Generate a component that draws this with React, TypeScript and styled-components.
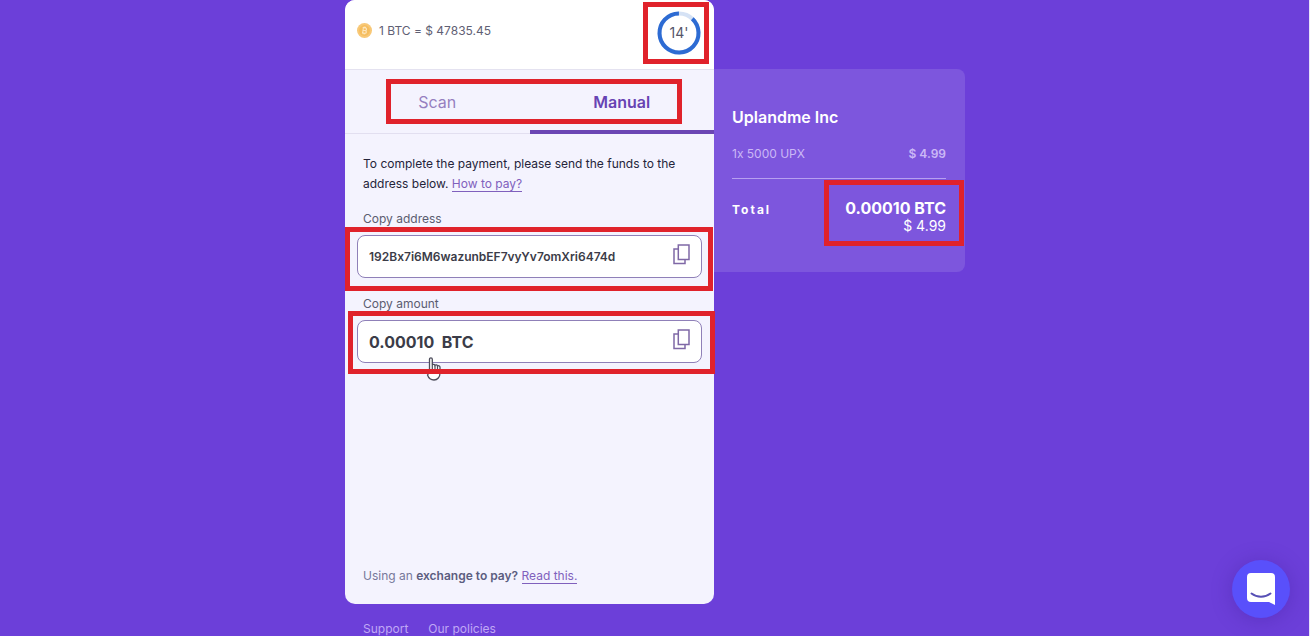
import React from "react";
import styled, { createGlobalStyle } from "styled-components";

const GlobalStyle = createGlobalStyle`
  *, *::before, *::after { box-sizing: border-box; }
  body {
    margin: 0;
    background: #6c3fd9;
    font-family: Inter, "Liberation Sans", sans-serif;
    font-feature-settings: "calt" 0;
    font-size: 12px;
    line-height: 20px;
    color: #24243a;
    overflow-x: hidden;
  }
  button, input { font: inherit; color: inherit; }
  p, h2, dl, dd, dt { margin: 0; }
`;

const Page = styled.div`
  display: flex;
  flex-direction: column;
  min-height: 100vh;
  box-shadow: inset -1px 0 #e9e3fa;
`;

const Checkout = styled.main`
  position: relative;
  display: flex;
  align-items: flex-start;
  width: 620px;
  max-width: 100%;
  margin: 0 auto;
`;

const PaymentColumn = styled.div`
  flex: 0 0 369px;
`;

const Card = styled.section`
  display: flex;
  flex-direction: column;
  min-height: 604px;
  border-radius: 10px;
  background: #f4f3fe;
  overflow: hidden;
`;

const CardHeader = styled.header`
  display: flex;
  align-items: center;
  justify-content: space-between;
  height: 70px;
  padding: 0 12px;
  background: #fff;
  border-bottom: 1px solid #e4e2f0;
`;

const Rate = styled.p`
  display: flex;
  align-items: center;
  gap: 7px;
  padding-bottom: 8px;
  color: #5f6074;
`;

const Timer = styled.svg`
  width: 46px;
  height: 46px;
  margin-top: -4px;
`;

const Tabs = styled.div`
  display: flex;
  height: 64px;
  border-bottom: 1px solid #e2dff0;
`;

const Tab = styled.button<{ $active?: boolean }>`
  flex: 1;
  height: 64px;
  padding: 4px 0 0;
  border: 0;
  border-bottom: 4px solid ${(p) => (p.$active ? "#6b46b4" : "transparent")};
  background: none;
  font-size: 16px;
  font-weight: ${(p) => (p.$active ? 600 : 400)};
  color: ${(p) => (p.$active ? "#6743b3" : "#967fc0")};
`;

const Body = styled.div`
  flex: 1;
  display: flex;
  flex-direction: column;
  padding: 20px 12px 18px;
`;

const Note = styled.p`
  padding: 0 6px;
`;

const FootNote = styled(Note)`
  margin-top: auto;
  color: #77789a;

  strong {
    font-weight: 600;
    color: #5c5d80;
  }
`;

const TextLink = styled.a`
  color: #8060bd;
  text-decoration: none;
  border-bottom: 1px solid #8060bd;
`;

const Field = styled.div`
  display: flex;
  flex-direction: column;
  padding: 15px 0 1px;
`;

const FieldLabel = styled.label`
  padding: 0 6px;
  color: #5b5c70;
`;

const FieldBox = styled.div`
  display: flex;
  align-items: center;
  height: 43px;
  margin-top: 6px;
  padding: 0 11px;
  border: 1px solid #8f80b8;
  border-radius: 8px;
  background: #fff;
`;

const FieldInput = styled.input<{ $large?: boolean }>`
  flex: 1;
  min-width: 0;
  padding: 0;
  border: 0;
  outline: 0;
  background: none;
  font-size: ${(p) => (p.$large ? 16 : 12)}px;
  font-weight: ${(p) => (p.$large ? 700 : 600)};
  color: #3b3c48;
  white-space: pre;
`;

const IconButton = styled.button`
  display: flex;
  padding: 0 0 4px;
  border: 0;
  background: none;
  color: #7f68a6;
`;

const FooterLinks = styled.nav`
  display: flex;
  gap: 20px;
  height: 32px;
  padding: 15px 18px 0;
  overflow: hidden;
`;

const FooterLink = styled.a`
  color: #c0a8f5;
  text-decoration: none;
  white-space: nowrap;
`;

const Summary = styled.aside`
  flex: 1;
  min-height: 203px;
  margin-top: 69px;
  padding: 38px 19px 0 18px;
  border-radius: 0 8px 8px 0;
  background: #7d56dd;
  color: #fff;
`;

const Merchant = styled.h2`
  font-size: 16px;
  line-height: 20px;
  font-weight: 600;
`;

const SummaryRow = styled.div<{ $total?: boolean }>`
  display: flex;
  justify-content: space-between;
  padding-top: ${(p) => (p.$total ? 21 : 17)}px;
  padding-bottom: ${(p) => (p.$total ? 0 : 14)}px;
  border-bottom: ${(p) => (p.$total ? "0" : "1px solid #b79ff0")};
  color: ${(p) => (p.$total ? "#fff" : "#cbb8f6")};
`;

const ItemPrice = styled.dd`
  font-weight: 600;
`;

const TotalLabel = styled.dt`
  font-weight: 700;
  letter-spacing: 2px;
`;

const TotalValue = styled.dd`
  text-align: right;
  line-height: 17px;
`;

const TotalCrypto = styled.div`
  font-size: 16px;
  font-weight: 700;
`;

const TotalFiat = styled.div`
  font-size: 14px;
`;

const Highlight = styled.div<{ $x: number; $y: number; $w: number; $h: number }>`
  position: absolute;
  left: ${(p) => p.$x}px;
  top: ${(p) => p.$y}px;
  width: ${(p) => p.$w}px;
  height: ${(p) => p.$h}px;
  border: 5px solid #e0222b;
  pointer-events: none;
`;

const Pointer = styled.svg`
  position: absolute;
  left: 79px;
  top: 356px;
  width: 20px;
  height: 26px;
  pointer-events: none;
`;

const ChatButton = styled.button`
  position: fixed;
  right: 20px;
  bottom: 18px;
  display: flex;
  align-items: center;
  justify-content: center;
  width: 58px;
  height: 58px;
  padding: 0;
  border: 0;
  border-radius: 50%;
  background: #5950fb;
  box-shadow: 0 2px 20px rgba(60, 30, 150, 0.35);
`;

const BitcoinIcon = () => (
  <svg width="15" height="15" viewBox="0 0 15 15" aria-hidden="true">
    <circle cx="7.5" cy="7.5" r="7.5" fill="#f8c877" />
    <circle cx="7.5" cy="7.5" r="5.4" fill="#f5bd5e" />
    <g transform="rotate(8 7.5 7.5)" fill="none" stroke="#fde6bd" strokeWidth="1.1">
      <path d="M6 4.800v5.400M5.300 4.800h2.700a1.300 1.300 0 0 1 0 2.700H6M8.200 7.500a1.350 1.350 0 0 1 0 2.700H5.300M6.700 3.600v1.200M8.100 3.600v1.200M6.700 10.200v1.200M8.100 10.200v1.200" />
    </g>
  </svg>
);

const CopyIcon = () => (
  <svg width="17" height="21" viewBox="0 0 17 21" fill="none" stroke="currentColor" strokeWidth="1.5" aria-hidden="true">
    <path d="M5.300 1h10.700v14.500h-10.700z" />
    <path d="M5.300 5h-4.300v14.500h11v-4" />
  </svg>
);

const CountdownIcon = () => (
  <Timer viewBox="0 0 46 46" role="img" aria-label="14 minutes left">
    <circle cx="23" cy="23" r="19.5" fill="none" stroke="#d5e2f5" strokeWidth="4" />
    <circle
      cx="23"
      cy="23"
      r="19.5"
      fill="none"
      stroke="#2d6bd3"
      strokeWidth="4"
      pathLength={100}
      strokeDasharray="88 12"
      transform="rotate(-47 23 23)"
    />
    <text x="23" y="28" textAnchor="middle" fontSize="14" fill="#55566a">
      14'
    </text>
  </Timer>
);

type CopyFieldProps = { id: string; label: string; value: string; large?: boolean };

const CopyField = ({ id, label, value, large }: CopyFieldProps) => (
  <Field>
    <FieldLabel htmlFor={id}>{label}</FieldLabel>
    <FieldBox>
      <FieldInput id={id} value={value} readOnly $large={large} />
      <IconButton type="button" aria-label={label}>
        <CopyIcon />
      </IconButton>
    </FieldBox>
  </Field>
);

export default function App() {
  return (
    <Page>
      <GlobalStyle />
      <Checkout>
        <PaymentColumn>
          <Card>
            <CardHeader>
              <Rate>
                <BitcoinIcon />
                1 BTC = $ 47835.45
              </Rate>
              <CountdownIcon />
            </CardHeader>
            <Tabs role="tablist">
              <Tab type="button" role="tab" aria-selected="false">Scan</Tab>
              <Tab type="button" role="tab" aria-selected="true" $active>Manual</Tab>
            </Tabs>
            <Body>
              <Note>
                To complete the payment, please send the funds to the address below.{" "}
                <TextLink href="#how-to-pay">How to pay?</TextLink>
              </Note>
              <CopyField id="address" label="Copy address" value="192Bx7i6M6wazunbEF7vyYv7omXri6474d" />
              <CopyField id="amount" label="Copy amount" value="0.00010  BTC" large />
              <FootNote>
                Using an <strong>exchange to pay?</strong> <TextLink href="#exchange">Read this.</TextLink>
              </FootNote>
            </Body>
          </Card>
          <FooterLinks>
            <FooterLink href="#support">Support</FooterLink>
            <FooterLink href="#policies">Our policies</FooterLink>
          </FooterLinks>
        </PaymentColumn>
        <Summary>
          <Merchant>Uplandme Inc</Merchant>
          <dl>
            <SummaryRow>
              <dt>1x 5000 UPX</dt>
              <ItemPrice>$ 4.99</ItemPrice>
            </SummaryRow>
            <SummaryRow $total>
              <TotalLabel>Total</TotalLabel>
              <TotalValue>
                <TotalCrypto>0.00010 BTC</TotalCrypto>
                <TotalFiat>$ 4.99</TotalFiat>
              </TotalValue>
            </SummaryRow>
          </dl>
        </Summary>
        <Pointer viewBox="0 0 20 26" aria-hidden="true">
          <path
            d="M5.500 16V3.200a1.400 1.400 0 0 1 2.800 0V9c.5-1 2.500-.8 2.700.4.7-.8 2.300-.5 2.500.6.8-.6 2.500-.2 2.500 1.200V17c0 4-2.500 7-6 7-3 0-5.300-1.600-6.500-5z"
            fill="#fff"
            stroke="#4c4c5a"
            strokeWidth="1.300"
          />
          <path d="M8.300 9v4M11 9.500v4M13.500 10v3.500" stroke="#4c4c5a" strokeWidth="1.200" />
        </Pointer>
        <Highlight $x={298} $y={2} $w={66} $h={62} />
        <Highlight $x={41} $y={79} $w={296} $h={45} />
        <Highlight $x={0} $y={227} $w={368} $h={64} />
        <Highlight $x={3} $y={311} $w={367} $h={63} />
        <Highlight $x={479} $y={180} $w={140} $h={66} />
      </Checkout>
      <ChatButton type="button" aria-label="Open chat">
        <svg width="28" height="32" viewBox="0 0 28 32" aria-hidden="true">
          <path d="M4 0h20a4 4 0 0 1 4 4v28l-6-3H4a4 4 0 0 1-4-4V4a4 4 0 0 1 4-4z" fill="#fff" />
          <path d="M4.500 20.500c5.500 4.300 13.500 4.300 19 0" fill="none" stroke="#5750b5" strokeWidth="2" strokeLinecap="round" />
        </svg>
      </ChatButton>
    </Page>
  );
}
